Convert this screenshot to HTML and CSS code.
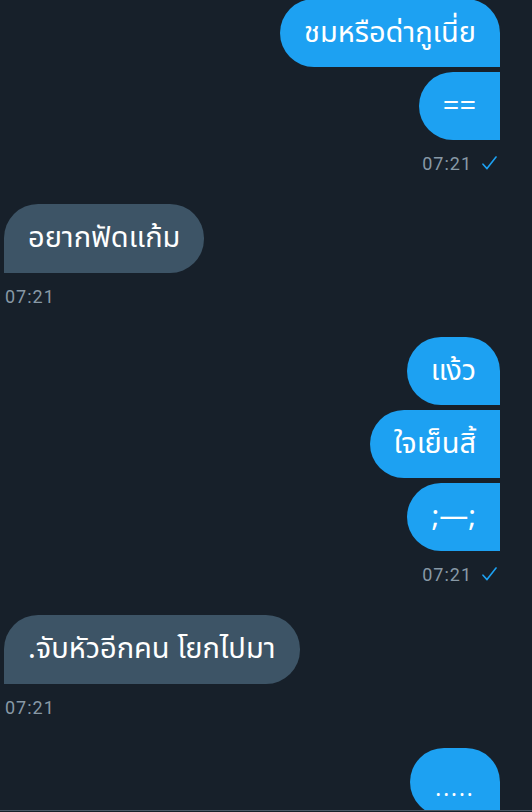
FILE: index.html
```html
<!DOCTYPE html>
<html lang="th">
<head>
    <meta charset="UTF-8">
    <meta name="viewport" content="width=device-width, initial-scale=1.0">
    <title>Chat</title>
    <link rel="stylesheet" href="styles.css">
</head>
<body>
    <div class="chat">
        <div class="messages">
            <!-- sent -->
            <div class="group sent first-group">
                <div class="bubble">ชมหรือด่ากูเนี่ย</div>
                <div class="bubble">==</div>
                <div class="meta">
                    <span class="time">07:21</span>
                    <svg class="check" width="15" height="14" viewBox="0 0 15 14"><path d="M1 8.2 L5 12.6 L14 1" fill="none" stroke="#1da1f2" stroke-width="1.6" stroke-linecap="round" stroke-linejoin="round"/></svg>
                </div>
            </div>

            <!-- received -->
            <div class="group received">
                <div class="bubble">อยากฟัดแก้ม</div>
                <div class="meta"><span class="time">07:21</span></div>
            </div>

            <div class="group sent">
                <div class="bubble">แง้ว</div>
                <div class="bubble">ใจเย็นสิ้</div>
                <div class="bubble">;—;</div>
                <div class="meta">
                    <span class="time">07:21</span>
                    <svg class="check" width="15" height="14" viewBox="0 0 15 14"><path d="M1 8.2 L5 12.6 L14 1" fill="none" stroke="#1da1f2" stroke-width="1.6" stroke-linecap="round" stroke-linejoin="round"/></svg>
                </div>
            </div>

            <div class="group received">
                <div class="bubble">.จับหัวอีกคน โยกไปมา</div>
                <div class="meta"><span class="time">07:21</span></div>
            </div>

            <div class="group sent">
                <div class="bubble dots">.....</div>
            </div>
        </div>
        <div class="composer"></div>
    </div>
</body>
</html>
```

FILE: styles.css
```css
/* Page */
body {
    margin: 0;
    background-color: #17202a;
    font-family: "Noto Sans Thai", "Noto Sans", "DejaVu Sans", sans-serif;
    color: #ffffff;
}

.chat {
    height: 812px;
    display: flex;
    flex-direction: column;
}

.messages {
    flex: 1;
    overflow: hidden;
    padding: 0 32px 0 4px;
}

.composer {
    height: 1px;
    border-top: 1px solid #4b5866;
}

/* Message groups */
.group {
    display: flex;
    flex-direction: column;
    gap: 5px;
}

.first-group {
    margin-top: -1px;
}

.sent {
    align-items: flex-end;
}

.received {
    align-items: flex-start;
}

/* Bubbles */
.bubble {
    height: 68px;
    line-height: 68px;
    padding: 0 24px;
    font-size: 29px;
    white-space: nowrap;
    border-radius: 34px;
}

.sent .bubble {
    background: #1da1f2;
    border-bottom-right-radius: 0;
}

.sent .bubble + .bubble {
    border-top-right-radius: 0;
}

.received .bubble {
    height: 69px;
    line-height: 69px;
    background: #3d5466;
    border-bottom-left-radius: 0;
}

.dots {
    width: 42px;
    font-size: 22px;
    text-align: center;
    letter-spacing: 2px;
    line-height: 84px;
}

/* Time row */
.meta {
    display: flex;
    align-items: center;
    gap: 10px;
    height: 20px;
    margin: 8px 3px 31px 1px;
}

.time {
    font-family: Roboto, "Liberation Sans", sans-serif;
    font-size: 18px;
    letter-spacing: 1px;
    color: #8899a6;
}

.check {
    display: block;
}
```
